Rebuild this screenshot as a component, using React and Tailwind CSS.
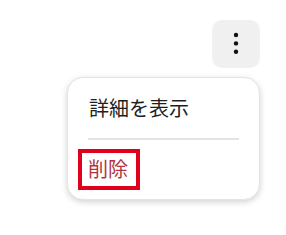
import React from "react";

const FONT = { fontFamily: '"Noto Sans", "Noto Sans CJK JP", sans-serif' };

function MoreButton() {
  return (
    <button className="w-12 h-12 rounded-[10px] bg-[#f0f0f0] flex items-center justify-center">
      <svg width="8" height="26" viewBox="0 0 8 26">
        <circle cx="4" cy="4" r="2.2" fill="#111" />
        <circle cx="4" cy="12.4" r="2.2" fill="#111" />
        <circle cx="4" cy="20.8" r="2.2" fill="#111" />
      </svg>
    </button>
  );
}

export default function App() {
  return (
    <div className="w-[286px] h-[235px] bg-white" style={FONT}>
      <div className="flex flex-col items-end pt-5 pr-[26px]">
        <MoreButton />
        <div className="mt-[9px] w-[193px] h-[123px] rounded-2xl bg-white border border-[#e4e4e4] shadow-[0_2px_6px_rgba(0,0,0,0.18)] pt-[13px]">
          <div className="h-[36px] flex items-center pl-[21px] text-[20px] text-[#1f1f1f]">
            詳細を表示
          </div>
          <div className="mt-[11px] mx-5 h-[2px] bg-[#e3e3e3]" />
          <div className="mt-[9px] ml-[10px] w-[62px] h-[41px] border-4 border-[#e0001b] flex items-center pl-[6px] text-[20px] text-[#b2353b]">
            削除
          </div>
        </div>
      </div>
    </div>
  );
}
